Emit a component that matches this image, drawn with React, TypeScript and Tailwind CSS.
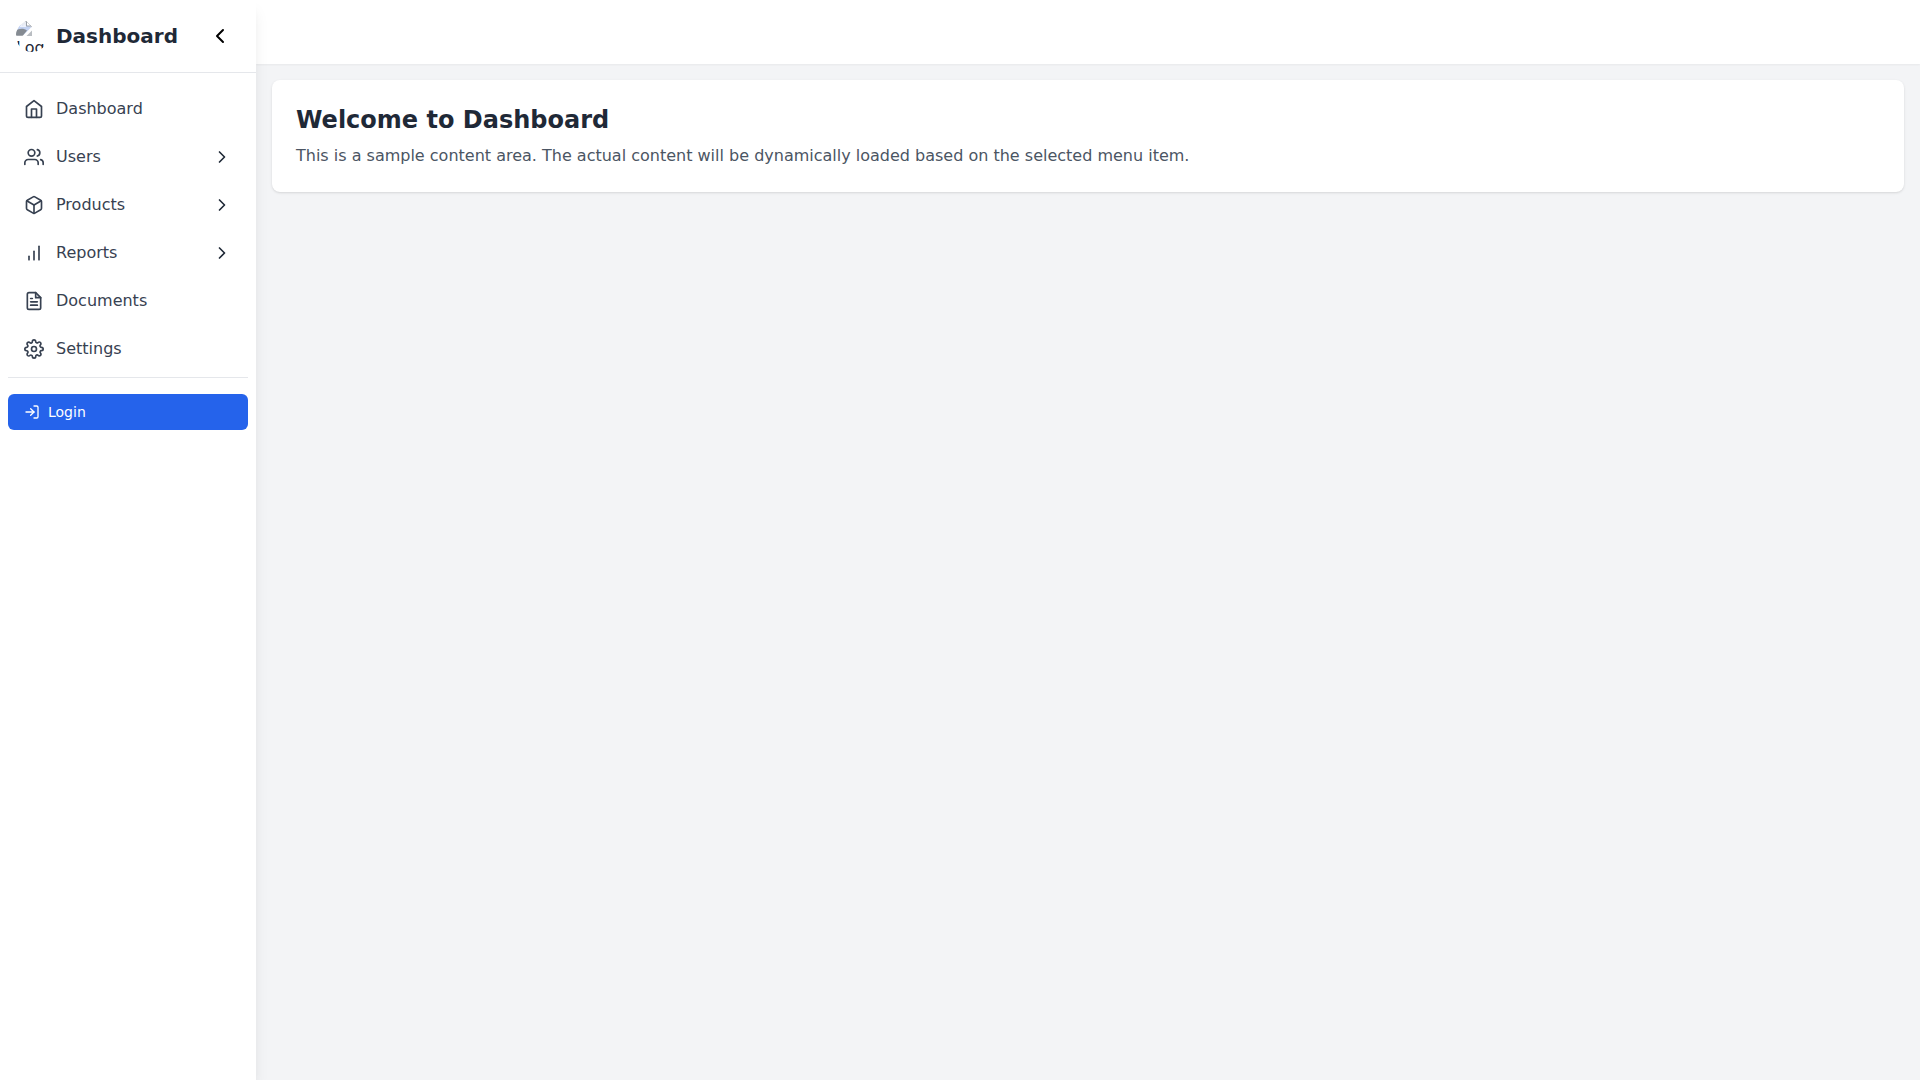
import { useState } from "react";
import type { IconType } from "react-icons";
import {
  FiBarChart,
  FiBox,
  FiChevronLeft,
  FiChevronRight,
  FiFileText,
  FiHome,
  FiLogIn,
  FiSettings,
  FiUsers,
} from "react-icons/fi";
import clsx from "clsx";

type MenuItem = { label: string; icon: IconType; children?: string[] };

const MENU: MenuItem[] = [
  { label: "Dashboard", icon: FiHome },
  { label: "Users", icon: FiUsers, children: ["All Users", "Add User"] },
  { label: "Products", icon: FiBox, children: ["All Products", "Add Product"] },
  { label: "Reports", icon: FiBarChart, children: ["Sales", "Traffic"] },
  { label: "Documents", icon: FiFileText },
  { label: "Settings", icon: FiSettings },
];

// Placeholder avatar: torn picture with the label wrapping under it
function Logo() {
  return (
    <div className="h-8 w-8 shrink-0 overflow-hidden rounded-full text-[#1f2937]">
      <svg viewBox="0 0 16 16" className="block h-4 w-4" aria-hidden="true">
        <path d="M0.500 1.500h10l5 5v9h-15z" fill="#e8ebf2" stroke="#a3a7ad" />
        <path d="M1 5h10l4 2v2l-6 6H1z" fill="#c3d2f2" />
        <path d="M4 6.500c0-1.500 2-2 3-1 1-1.500 3-1 3 .500v1H4z" fill="#eef2fb" />
        <path d="M0 15V11c2-2.500 8-3 11-.500L7.500 15z" fill="#858b92" />
        <path d="M10.500 1.500v4.500h4.500" fill="#fff" stroke="#9aa0a8" />
        <path d="M16 6.500 6.500 16H16z" fill="#fff" />
        <path d="M16 10.500V16h-5.500z" fill="#b9bdc2" />
      </svg>
      <span className="block text-base">Logo</span>
    </div>
  );
}

function Sidebar() {
  const [collapsed, setCollapsed] = useState(false);
  const [open, setOpen] = useState<string | null>(null);

  return (
    <aside className={clsx("z-10 shrink-0 bg-white shadow-lg", collapsed ? "w-20" : "w-64")}>
      <div className="flex items-center justify-between border-b border-[#e5e7eb] p-4">
        {!collapsed && (
          <div className="flex items-center gap-2">
            <Logo />
            <span className="text-xl font-bold text-[#1f2937]">Dashboard</span>
          </div>
        )}
        <button onClick={() => setCollapsed(c => !c)} className="rounded-lg p-2 text-black hover:bg-gray-100" aria-label="Toggle sidebar">
          <FiChevronLeft className={clsx("h-6 w-6", collapsed && "rotate-180")} />
        </button>
      </div>

      <nav className="px-2 py-4">
        <ul className="flex flex-col gap-2">
          {MENU.map(({ label, icon: Icon, children }) => (
            <li key={label}>
              {children ? (
                <button
                  onClick={() => setOpen(o => (o === label ? null : label))}
                  aria-expanded={open === label}
                  className="flex w-full items-center rounded-lg px-4 py-2 text-[#374151] hover:bg-gray-100"
                >
                  <Icon className="h-5 w-5 shrink-0" />
                  {!collapsed && <span className="ml-3 flex-1 text-left">{label}</span>}
                  {!collapsed && <FiChevronRight className={clsx("h-5 w-5 text-[#1f2937]", open === label && "rotate-90")} />}
                </button>
              ) : (
                <a href="#" className="flex items-center rounded-lg px-4 py-2 text-[#374151] hover:bg-gray-100">
                  <Icon className="h-5 w-5 shrink-0" />
                  {!collapsed && <span className="ml-3">{label}</span>}
                </a>
              )}
              {children && open === label && !collapsed && (
                <ul className="ml-12 text-sm text-[#4b5563]">
                  {children.map(c => (
                    <li key={c}><a href="#" className="block py-2">{c}</a></li>
                  ))}
                </ul>
              )}
            </li>
          ))}
        </ul>

        <div className="mt-2 border-t border-[#e5e7eb] pt-4">
          <button className="flex w-full items-center rounded-md bg-[#2563eb] px-4 py-2 text-sm text-white hover:bg-[#1d4ed8]">
            <FiLogIn className="h-4 w-4" />
            {!collapsed && <span className="ml-2">Login</span>}
          </button>
        </div>
      </nav>
    </aside>
  );
}

export default function App() {
  return (
    <div className="flex min-h-screen bg-[#f3f4f6] font-['DejaVu_Sans',sans-serif]">
      <Sidebar />
      <div className="min-w-0 flex-1">
        <header className="h-16 bg-white shadow-xs" />
        <main className="p-4">
          <div className="rounded-lg bg-white p-6 shadow-sm">
            <h1 className="mb-2 text-2xl font-bold text-[#1f2937]">Welcome to Dashboard</h1>
            <p className="text-[#4b5563]">
              This is a sample content area. The actual content will be dynamically loaded based on the selected menu item.
            </p>
          </div>
        </main>
      </div>
    </div>
  );
}
